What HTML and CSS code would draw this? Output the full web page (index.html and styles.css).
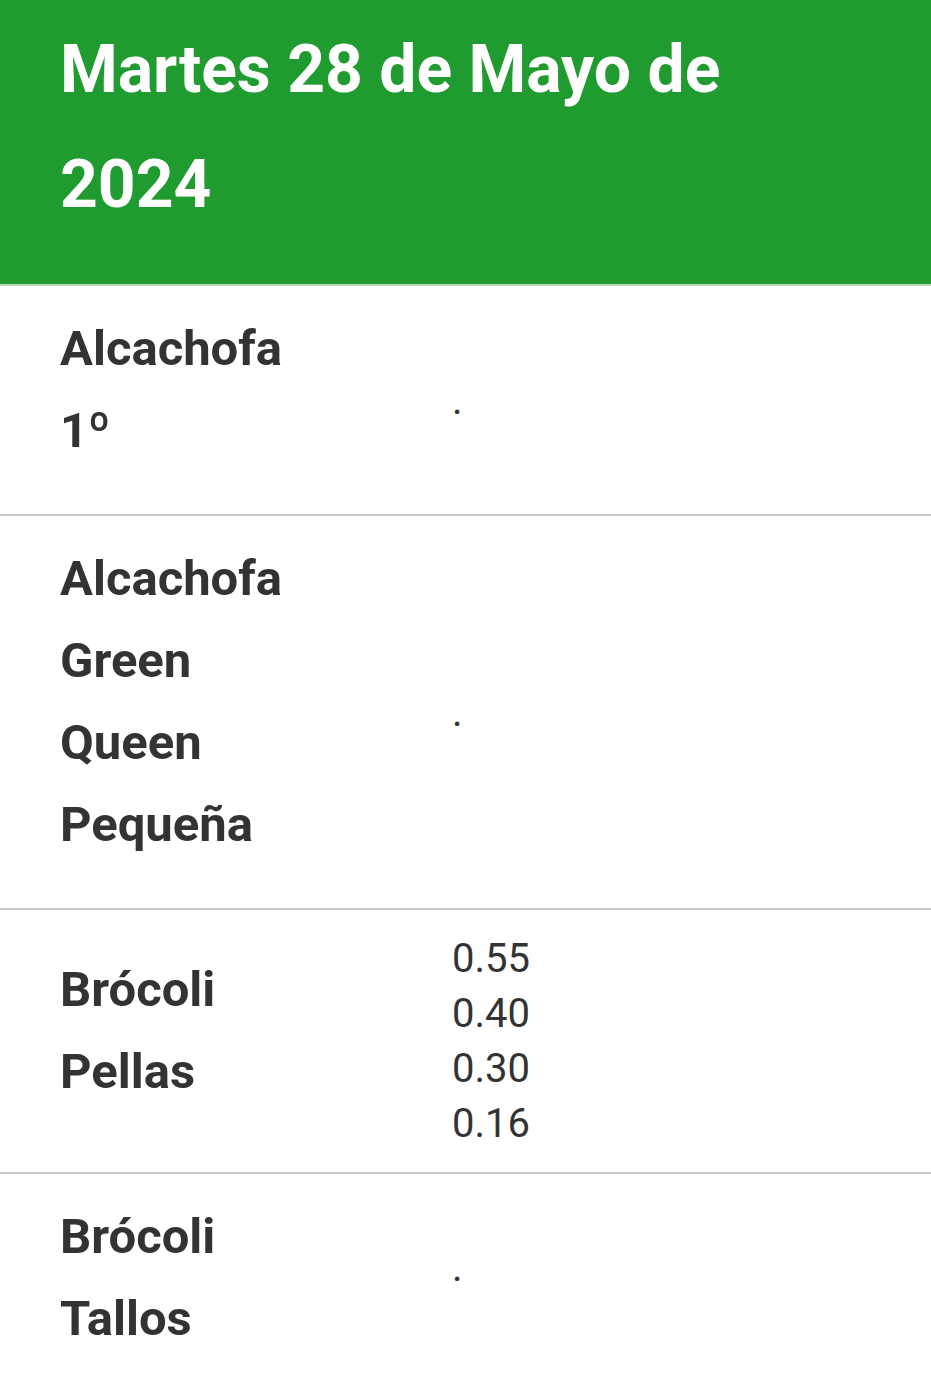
FILE: index.html
```html
<!DOCTYPE html>
<html lang="es">
<head>
<meta charset="utf-8">
<title>Precios</title>
<link rel="stylesheet" href="styles.css">
</head>
<body>
<header class="day-header">
  <h1 class="day-title">Martes 28 de Mayo de 2024</h1>
</header>
<main class="price-table">
  <div class="price-row">
    <div class="product">Alcachofa 1º</div>
    <div class="prices"><span>.</span></div>
  </div>
  <div class="price-row">
    <div class="product">Alcachofa Green Queen Pequeña</div>
    <div class="prices"><span>.</span></div>
  </div>
  <div class="price-row">
    <div class="product">Brócoli Pellas</div>
    <div class="prices"><span>0.55</span><span>0.40</span><span>0.30</span><span>0.16</span></div>
  </div>
  <div class="price-row">
    <div class="product">Brócoli Tallos</div>
    <div class="prices"><span>.</span></div>
  </div>
</main>
</body>
</html>
```
FILE: styles.css
```css
html, body {
  margin: 0;
  padding: 0;
  background: #ffffff;
}
body {
  font-family: Roboto, "Noto Sans", "Liberation Sans", sans-serif;
  color: #333333;
}
.day-header {
  background: #1f9b2f;
  border-bottom: 2px solid #b8dbbc;
  padding: 12px 100px 42px 60px;
}
.day-title {
  margin: 0;
  font-size: 66px;
  line-height: 115px;
  font-weight: 700;
  color: #ffffff;
}
.price-row {
  display: grid;
  grid-template-columns: 452px 1fr;
  align-items: center;
  border-bottom: 2px solid #c8c8c8;
}
.price-row:last-child {
  border-bottom: none;
}
.product {
  padding: 22px 140px 42px 60px;
  font-size: 49px;
  line-height: 82px;
  font-weight: 700;
}
.price-row:last-child .product {
  padding-bottom: 0;
}
.prices {
  display: flex;
  flex-direction: column;
  padding: 21px 0;
  font-size: 40px;
  line-height: 55px;
  font-weight: 400;
}
```
